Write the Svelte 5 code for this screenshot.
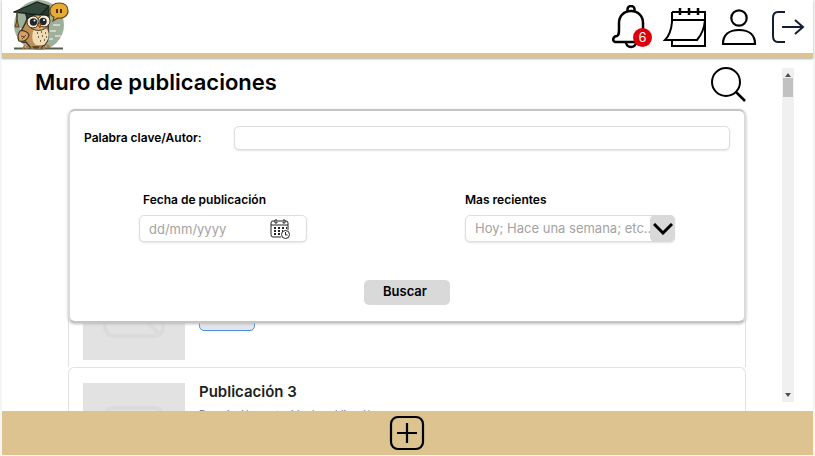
<script>
  const posts = [
    { id: 1, title: 'Publicación 1' },
    { id: 2, title: 'Publicación 2' },
    { id: 3, title: 'Publicación 3' }
  ];
  let keyword = $state('');
  let date = $state('');
</script>

<div class="app">
  <header>
    <a class="logo" href="#inicio" aria-label="Inicio">
      <svg width="56" height="50" viewBox="0 0 56 50" aria-hidden="true">
        <circle cx="26" cy="25" r="25" fill="#9eb09b" />
        <path d="M37 31h6M42 36h6M40 25h7M7 29h4M36 39h4" stroke="#dce3d5" stroke-width="1.5" />
        <path d="M1 48.500h49" stroke="#53604f" stroke-width="2" />
        <path d="M14 19c-3 9-8 13-8 19 0 3 3 5 7 4l4 5h12c6-4 7-10 6-16l1-14z" fill="#c08f55" stroke="#3b3226" stroke-width="1.400" />
        <path d="M21 29c-3 7-2 13 2 16h8c5-5 6-11 3-16z" fill="#f0ddb4" />
        <path d="M24 33h1m3-1h1m3 1h1m-8 4h1m3-1h1m3 1h1m-7 4h1m3-1h1" stroke="#54432e" stroke-width="1.300" />
        <path d="M7 31c4-1 8 1 9 4-1 5-5 7-10 6-2-4-1-7 1-10z" fill="#d5a263" stroke="#453522" stroke-width="1.200" />
        <path d="M8 36l4 1m-3 2l4-4" stroke="#684b29" />
        <path d="M14 15l2 11c4 6 16 6 19-1l1-11z" fill="#dfb06f" stroke="#453522" />
        <circle cx="20" cy="22" r="6" fill="#f9ecd1" stroke="#3c3225" />
        <circle cx="31" cy="21" r="6" fill="#f9ecd1" stroke="#3c3225" />
        <circle cx="20.500" cy="22" r="3.700" fill="#20262a" />
        <circle cx="30" cy="21.500" r="3.700" fill="#20262a" />
        <circle cx="21.500" cy="20.500" r="1" fill="#fff" />
        <circle cx="31" cy="20" r="1" fill="#fff" />
        <path d="M24 24l4-1-1 5z" fill="#d77e25" stroke="#4b3420" stroke-width=".7" />
        <path d="M12 45l-2 4m4-3v3m4-3l2 3m8-3l-2 3m5-3v3m3-4l3 3" stroke="#b47433" stroke-width="2" />
        <path d="M12 12l2 7c6-5 14-6 22-3V7z" fill="#28382f" stroke="#18231d" />
        <path d="M1 12L24 2l12 4-9 9z" fill="#35483c" stroke="#18231d" stroke-width="1.300" />
        <path d="M4 11v13" stroke="#493b22" stroke-width="1.500" />
        <path d="M4 20l-2 7h4z" fill="#ad7930" stroke="#493b22" stroke-width=".8" />
        <path d="M37 11c0-5 4-8 9-8 6 0 9 3 9 8s-5 8-10 7l-5 3 1-4c-3-1-4-3-4-6z" fill="#e6aa36" stroke="#67451d" stroke-width="1.200" />
        <path d="M44 9v4m4-4v4" stroke="#493115" stroke-width="2" />
      </svg>
    </a>
    <nav>
      <button class="icon bell" aria-label="Notificaciones">
        <svg width="40" height="44" viewBox="0 0 40 44" fill="none" stroke="#000" stroke-width="2.500">
          <path d="M15.500 6.500V4a3.500 3 0 0 1 7 0v2.500" />
          <path d="M3 37c-3-1-2-6 2-6 2-1 2-3 2-7v-6c0-7 5-12 12-12s12 5 12 12v6c0 4 0 6 2 7 4 0 5 5 2 6z" />
          <path d="M14 37a5 5 0 0 0 10 0" />
        </svg>
        <span class="badge">6</span>
      </button>
      <button class="icon" aria-label="Calendario">
        <svg width="44" height="40" viewBox="0 0 44 40" fill="none" stroke="#000" stroke-width="2">
          <path d="M9 5h33v34H9v-5M9 5v10Q8 27 2 33h32q7-8 8-20M9 13h33" />
          <path d="M17 1v7m9-7v7m9-7v7" stroke-width="2.500" />
        </svg>
      </button>
      <button class="icon" aria-label="Perfil">
        <svg width="36" height="38" viewBox="0 0 36 38" fill="none" stroke="#000" stroke-width="2.200">
          <circle cx="18" cy="10" r="7.700" />
          <path d="M2 36c0-9 6-14 16-14s16 5 16 14z" />
        </svg>
      </button>
      <button class="icon" aria-label="Salir">
        <svg width="34" height="34" viewBox="0 0 34 34" fill="none" stroke="#141d36" stroke-width="2">
          <path d="M14 2H7Q2 2 2 8v18q0 6 5 6h7M11 17h21m-8-7l8 7-8 7" />
        </svg>
      </button>
    </nav>
  </header>

  <main>
    <section class="wall">
      <div class="heading">
        <h1>Muro de publicaciones</h1>
        <button class="icon" aria-label="Buscar publicaciones">
          <svg width="36" height="36" viewBox="0 0 36 36" fill="none" stroke="#000" stroke-width="2">
            <circle cx="16" cy="16" r="14" />
            <path d="M26 26l9 9" stroke-width="2.500" />
          </svg>
        </button>
      </div>

      <div class="board">
        <div class="feed">
          {#each posts as post (post.id)}
            <article>
              <div class="thumb">
                <svg width="62" height="56" viewBox="0 0 62 56" fill="none" stroke="#dbdbdb" stroke-width="4" aria-hidden="true">
                  <rect x="2" y="2" width="58" height="52" rx="9" />
                  <circle cx="19" cy="17" r="5" />
                  <path d="M27 23l28 28" />
                </svg>
              </div>
              <div class="body">
                <h2>{post.title}</h2>
                <p>Descripción contenido de publicación</p>
                <button class="more">Ver más</button>
              </div>
            </article>
          {/each}
        </div>

        <form class="panel" onsubmit={(event) => event.preventDefault()}>
          <div class="keyword">
            <label for="keyword">Palabra clave/Autor:</label>
            <input id="keyword" type="text" bind:value={keyword} />
          </div>
          <div class="filters">
            <div class="field date">
              <label for="date">Fecha de publicación</label>
              <div class="control">
                <input id="date" type="text" placeholder="dd/mm/yyyy" bind:value={date} />
                <svg class="date-icon" width="20" height="20" viewBox="0 0 20 20" fill="none" stroke="#222" aria-hidden="true">
                  <path d="M11 18H3q-2 0-2-2V4q0-2 2-2h2m3 0h4m3 0h1q2 0 2 2v7M1 6h17" />
                  <path d="M5 1v3h2V1zM13 1v3h2V1z" />
                  <path d="M4 9h2m2 0h2m2 0h2m2 0h1M4 12h2m2 0h2m2 0h1M4 15h2m2 0h2" stroke-width="2" />
                  <circle cx="15.500" cy="15.500" r="4" fill="#fff" />
                  <path d="M15.500 13v3h2" />
                </svg>
              </div>
            </div>
            <div class="field recent">
              <label for="recent">Mas recientes</label>
              <div class="control">
                <select id="recent">
                  <option>Hoy; Hace una semana; etc..</option>
                  <option>Hoy</option>
                  <option>Hace una semana</option>
                </select>
                <span class="arrow">
                  <svg width="20" height="12" viewBox="0 0 20 12" fill="none" stroke="#000" stroke-width="3" aria-hidden="true">
                    <path d="M1 1l9 9 9-9" />
                  </svg>
                </span>
              </div>
            </div>
          </div>
          <button class="submit" type="submit">Buscar</button>
        </form>
      </div>
    </section>

    <div class="scrollbar" aria-hidden="true">
      <svg width="6" height="4" viewBox="0 0 6 4"><path d="M0 4l3-4 3 4z" fill="#505050" /></svg>
      <span class="handle"></span>
      <svg width="6" height="4" viewBox="0 0 6 4"><path d="M0 0l3 4 3-4z" fill="#505050" /></svg>
    </div>
  </main>

  <footer>
    <button class="icon" aria-label="Nueva publicación">
      <svg width="36" height="36" viewBox="0 0 36 36" fill="none" stroke="#000" stroke-width="2.200">
        <rect x="2" y="2" width="32" height="32" rx="7" />
        <path d="M18 8v20M8 18h20" />
      </svg>
    </button>
  </footer>
</div>

<style>
  :global(body) {
    background: #f5f5f5;
  }
  .app, .app * {
    box-sizing: border-box;
  }
  .app {
    display: flex;
    flex-direction: column;
    height: 100vh;
    padding: 0 2px 1px;
    overflow: hidden;
    font-family: Inter, "Liberation Sans", sans-serif;
    color: #000;
  }
  svg {
    display: block;
    flex: none;
  }
  button, input, select {
    font-family: inherit;
    margin: 0;
  }
  .icon {
    padding: 0;
    border: 0;
    background: none;
  }
  header {
    position: relative;
    z-index: 2;
    display: flex;
    flex: none;
    justify-content: space-between;
    height: 58px;
    padding: 0 8px 0 11px;
    background: #fff;
    border-bottom: 5px solid #dcc38f;
    box-shadow: 0 1px 2px #aaa;
  }
  nav {
    display: flex;
    align-items: center;
    gap: 14px;
  }
  .bell {
    position: relative;
    margin-right: -3px;
  }
  .badge {
    position: absolute;
    right: 0;
    bottom: 2px;
    width: 19px;
    height: 19px;
    border-radius: 50%;
    background: #dc0008;
    color: #fff;
    font-size: 13px;
    line-height: 19px;
    text-align: center;
  }
  main {
    display: flex;
    flex: 1;
    gap: 36px;
    min-height: 0;
    padding: 0 19px 0 33px;
    background: #fff;
  }
  .wall {
    display: flex;
    flex: 1;
    flex-direction: column;
    min-width: 0;
  }
  .heading {
    display: flex;
    flex: none;
    align-items: center;
    justify-content: space-between;
    height: 51px;
  }
  h1, h2, p {
    margin: 0;
  }
  h1 {
    font-size: 22px;
    line-height: 48px;
    font-weight: 600;
    align-self: start;
  }
  .board {
    position: relative;
    flex: 1;
    min-height: 0;
    margin-left: 33px;
  }
  .feed {
    height: 100%;
    padding-top: 10px;
    overflow: hidden;
  }
  article {
    display: flex;
    gap: 14px;
    height: 124px;
    padding: 15px 14px;
    border: 1px solid #e2e2e2;
    border-bottom: 0;
    border-radius: 6px 6px 0 0;
  }
  .thumb {
    display: grid;
    flex: none;
    place-items: center;
    width: 102px;
    height: 101px;
    background: #e2e2e2;
  }
  h2 {
    font-size: 15px;
    line-height: 18px;
    font-weight: 600;
    color: #1e1e1e;
  }
  p {
    margin-top: 4px;
    font-size: 10px;
    line-height: 18px;
    color: #757575;
  }
  .more {
    width: 56px;
    height: 26px;
    margin-top: 6px;
    padding: 0;
    border: 1px solid #4a8de0;
    border-radius: 5px;
    background: #e2e5ea;
    font-size: 11px;
  }
  .panel {
    position: absolute;
    top: 0;
    left: 0;
    right: 0;
    display: flex;
    flex-direction: column;
    padding: 15px 14px 16px;
    border: 2px solid #dadada;
    border-top-color: #c4c4c4;
    border-bottom-color: #c4c4c4;
    border-radius: 7px;
    background: #fff;
    box-shadow: 0 1px 3px #bbb;
  }
  label {
    font-size: 12px;
    line-height: 16px;
    font-weight: 600;
  }
  .keyword {
    display: flex;
    align-items: center;
    gap: 32px;
  }
  input, select {
    width: 100%;
    border: 1px solid #dedede;
    border-radius: 5px;
    background: #fff;
    box-shadow: 0 1px 2px #e4e4e4;
    font-size: 13px;
  }
  .keyword input {
    flex: 1;
    width: auto;
    height: 24px;
    padding: 0 8px;
  }
  .keyword label {
    flex: none;
  }
  .filters {
    display: flex;
    justify-content: space-between;
    padding: 42px 55px 0;
  }
  .field label {
    display: block;
    margin-bottom: 7px;
  }
  .date {
    width: 168px;
  }
  .date label {
    padding-left: 4px;
  }
  .recent {
    width: 210px;
  }
  .control {
    position: relative;
  }
  .control input, .control select {
    display: block;
    height: 27px;
    padding: 0 9px;
    color: #a3a3a3;
    appearance: none;
  }
  .control select {
    padding-bottom: 2px;
  }
  input::placeholder {
    color: #a3a3a3;
    opacity: 1;
  }
  .date-icon {
    position: absolute;
    top: 4px;
    right: 17px;
  }
  .arrow {
    position: absolute;
    inset: 0 0 0 auto;
    display: grid;
    place-items: center;
    width: 25px;
    border-radius: 5px;
    background: #d9d9d9;
    pointer-events: none;
  }
  .submit {
    align-self: center;
    width: 86px;
    height: 25px;
    margin: 38px 0 0;
    padding: 0 4px 3px 0;
    border: 0;
    border-radius: 5px;
    background: #d9d9d9;
    color: #000;
    font-size: 13px;
    font-weight: 600;
  }
  .scrollbar {
    display: flex;
    flex: none;
    flex-direction: column;
    align-items: center;
    width: 12px;
    margin: 10px 0 9px;
    padding: 5px 0;
    background: #f0f0f0;
  }
  .handle {
    width: 10px;
    height: 19px;
    margin: 1px 0 auto;
    background: #c1c1c1;
  }
  footer {
    display: flex;
    flex: none;
    align-items: center;
    justify-content: center;
    height: 44px;
    padding-right: 1px;
    background: #dcc38f;
  }
</style>
